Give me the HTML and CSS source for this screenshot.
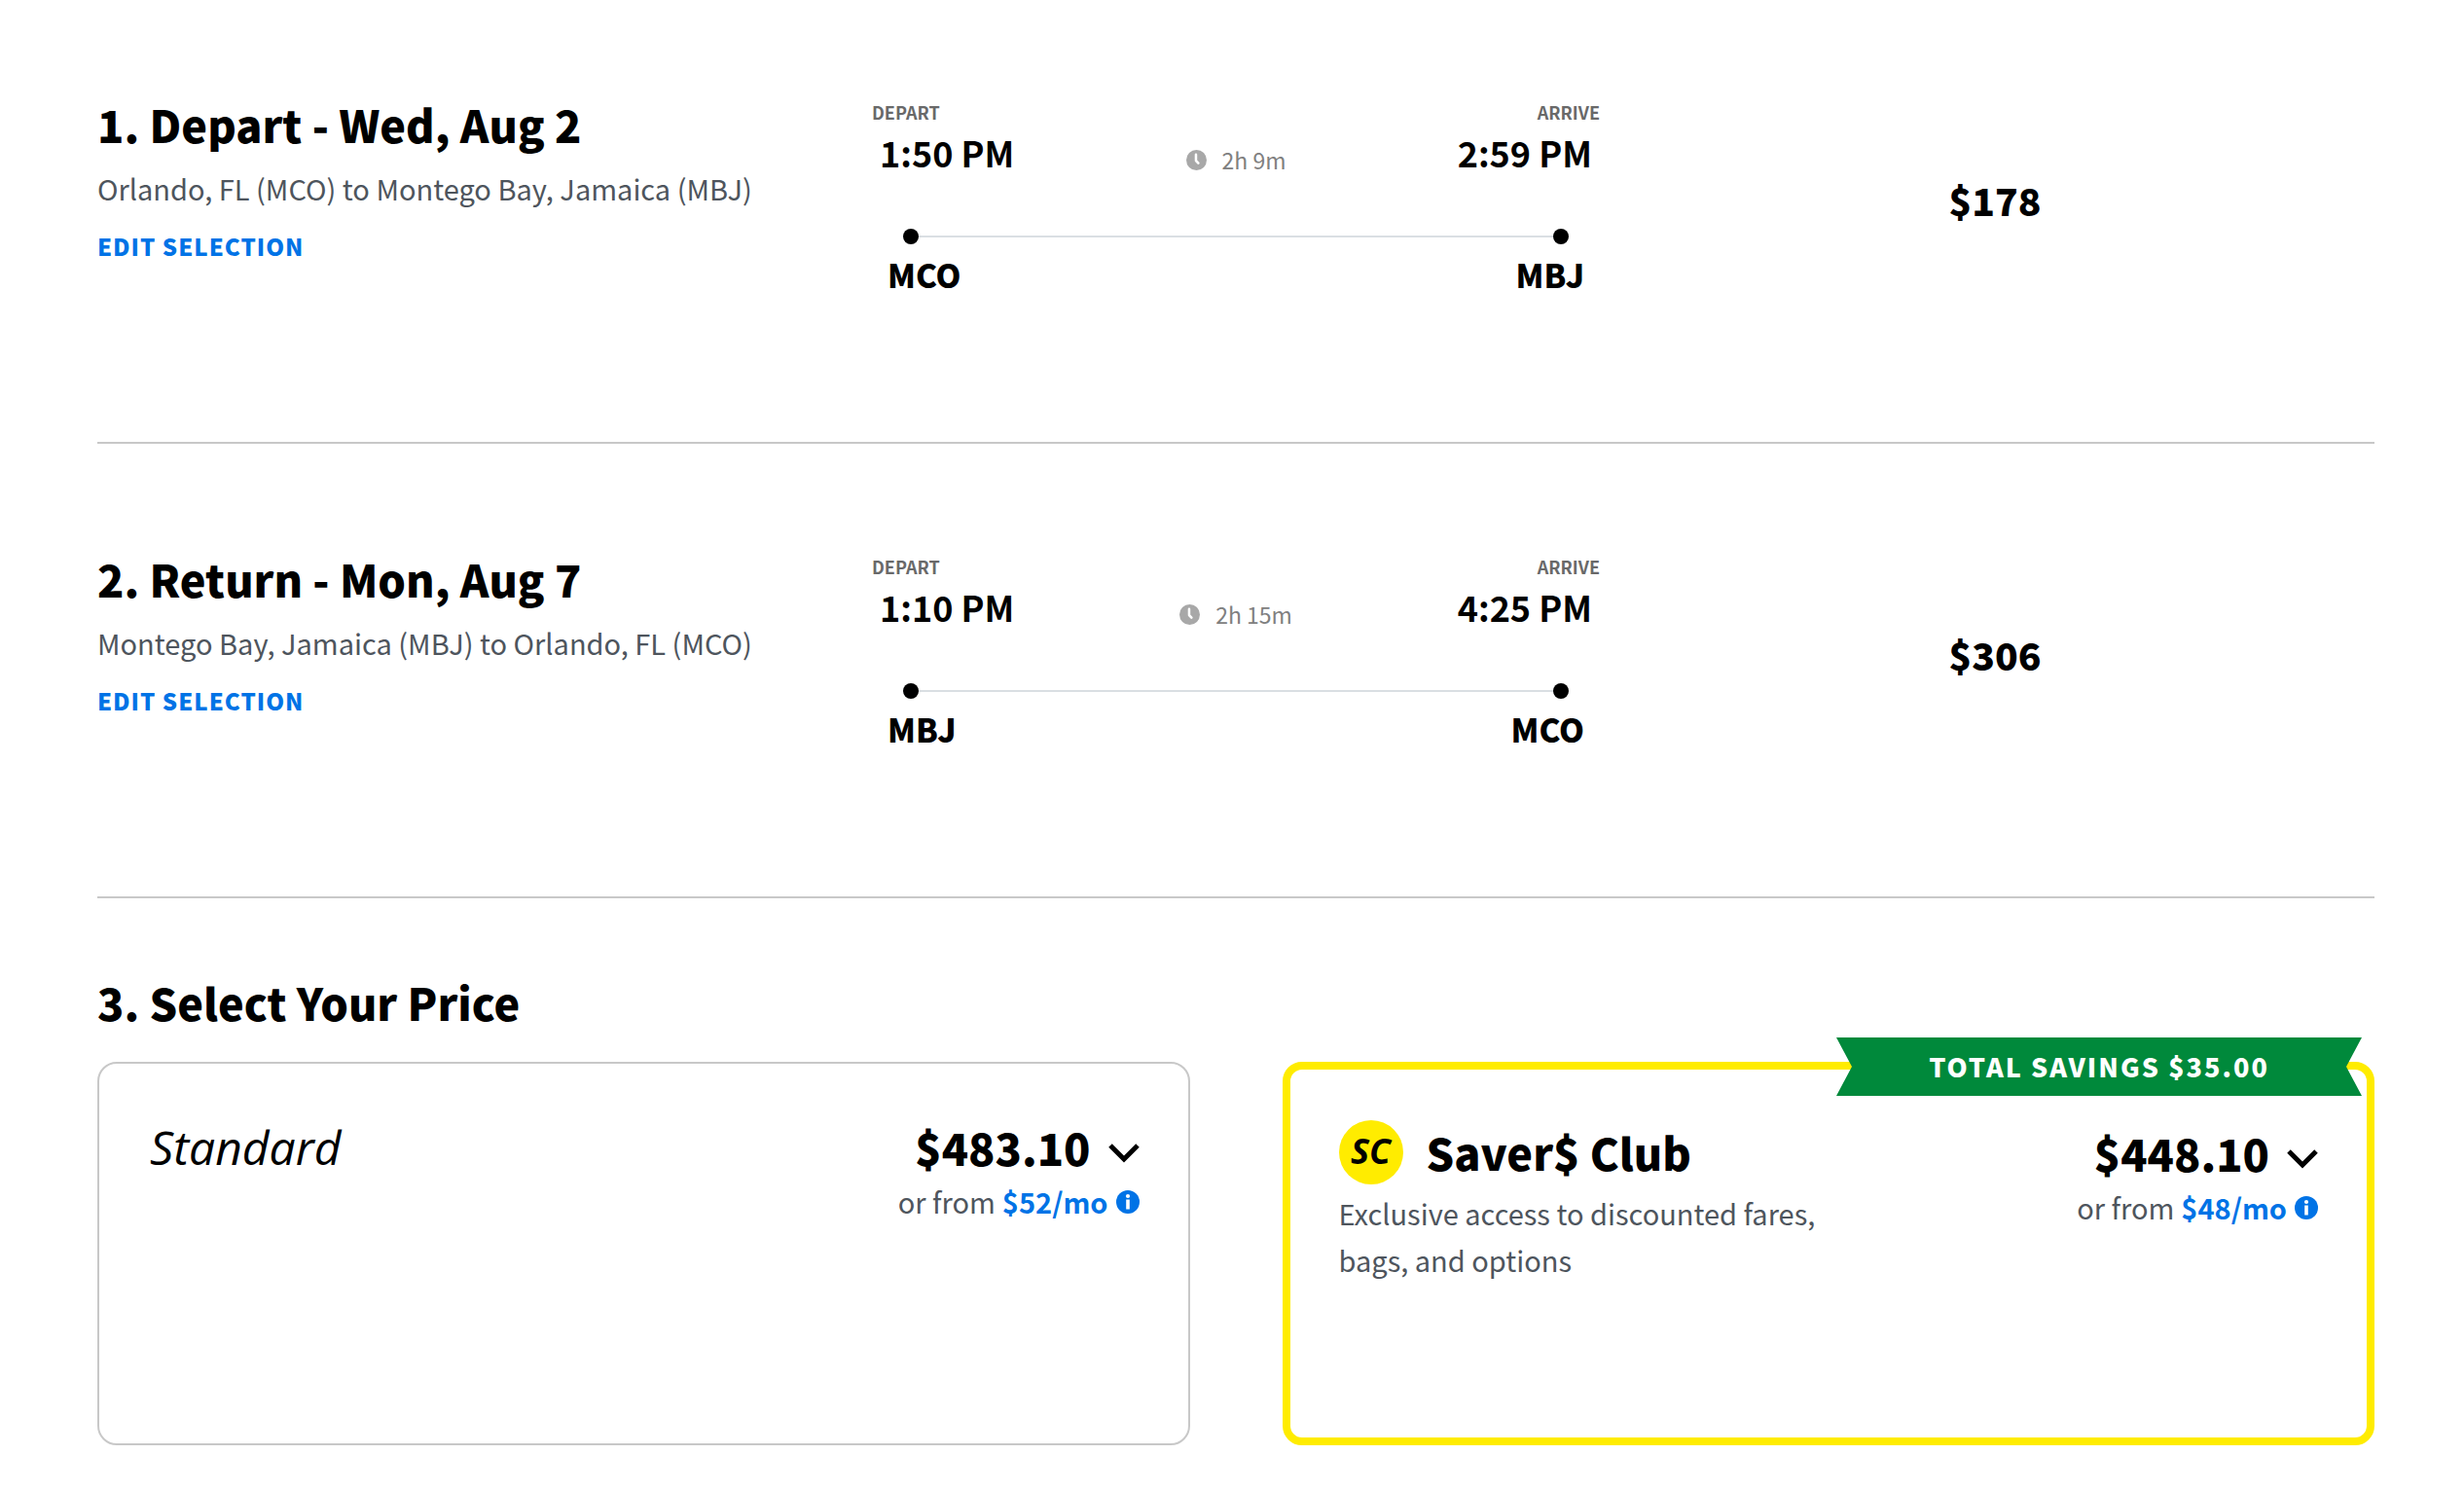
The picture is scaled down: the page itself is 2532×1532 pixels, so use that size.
FILE: index.html
```html
<!DOCTYPE html>
<html lang="en">
<head>
    <meta charset="UTF-8">
    <meta name="viewport" content="width=device-width, initial-scale=1.0">
    <title>Select Your Price</title>
    <link rel="stylesheet" href="styles.css">
</head>
<body>
    <main class="container">
        <section class="flight">
            <div class="flight-info">
                <h2>1. Depart - Wed, Aug 2</h2>
                <p class="route">Orlando, FL (MCO) to Montego Bay, Jamaica (MBJ)</p>
                <a class="edit-link" href="#">EDIT SELECTION</a>
            </div>
            <div class="schedule">
                <div class="labels"><span>DEPART</span><span>ARRIVE</span></div>
                <div class="times">
                    <span>1:50 PM</span>
                    <span class="duration">
                        <svg class="clock" viewBox="0 0 20 20" aria-hidden="true">
                            <circle cx="10" cy="10" r="10" fill="#a8a8a8"/>
                            <path d="M9.5 4.5V10.5L11.8 13" fill="none" stroke="#fff" stroke-width="2.4" stroke-linecap="round" stroke-linejoin="round"/>
                        </svg>
                        2h 9m
                    </span>
                    <span>2:59 PM</span>
                </div>
                <div class="track"></div>
                <div class="airports"><span>MCO</span><span>MBJ</span></div>
            </div>
            <div class="fare">$178</div>
        </section>

        <section class="flight">
            <div class="flight-info">
                <h2>2. Return - Mon, Aug 7</h2>
                <p class="route">Montego Bay, Jamaica (MBJ) to Orlando, FL (MCO)</p>
                <a class="edit-link" href="#">EDIT SELECTION</a>
            </div>
            <div class="schedule">
                <div class="labels"><span>DEPART</span><span>ARRIVE</span></div>
                <div class="times">
                    <span>1:10 PM</span>
                    <span class="duration">
                        <svg class="clock" viewBox="0 0 20 20" aria-hidden="true">
                            <circle cx="10" cy="10" r="10" fill="#a8a8a8"/>
                            <path d="M9.5 4.5V10.5L11.8 13" fill="none" stroke="#fff" stroke-width="2.4" stroke-linecap="round" stroke-linejoin="round"/>
                        </svg>
                        2h 15m
                    </span>
                    <span>4:25 PM</span>
                </div>
                <div class="track"></div>
                <div class="airports"><span>MBJ</span><span>MCO</span></div>
            </div>
            <div class="fare">$306</div>
        </section>

        <section class="prices">
            <h2>3. Select Your Price</h2>
            <div class="cards">
                <div class="card standard">
                    <h3 class="standard-title">Standard</h3>
                    <div class="card-price">
                        <button type="button" class="total">
                            $483.10
                            <svg class="chevron" viewBox="0 0 32 20" aria-hidden="true">
                                <path d="M2 2L16 16L30 2" fill="none" stroke="#000" stroke-width="5"/>
                            </svg>
                        </button>
                        <p class="monthly">or from
                            <a href="#">$52/mo
                                <svg class="info" viewBox="0 0 24 24" aria-hidden="true">
                                    <circle cx="12" cy="12" r="12" fill="#0073e6"/>
                                    <path d="M12 9.5V19.5" stroke="#fff" stroke-width="3.6"/>
                                    <circle cx="12" cy="6" r="2.1" fill="#fff"/>
                                </svg>
                            </a>
                        </p>
                    </div>
                </div>

                <div class="card club">
                    <div class="ribbon">TOTAL SAVINGS $35.00</div>
                    <div class="club-info">
                        <div class="club-title">
                            <span class="club-badge">SC</span>
                            <h3>Saver$ Club</h3>
                        </div>
                        <p class="club-text">Exclusive access to discounted fares, bags, and options</p>
                    </div>
                    <div class="card-price">
                        <button type="button" class="total">
                            $448.10
                            <svg class="chevron" viewBox="0 0 32 20" aria-hidden="true">
                                <path d="M2 2L16 16L30 2" fill="none" stroke="#000" stroke-width="5"/>
                            </svg>
                        </button>
                        <p class="monthly">or from
                            <a href="#">$48/mo
                                <svg class="info" viewBox="0 0 24 24" aria-hidden="true">
                                    <circle cx="12" cy="12" r="12" fill="#0073e6"/>
                                    <path d="M12 9.5V19.5" stroke="#fff" stroke-width="3.6"/>
                                    <circle cx="12" cy="6" r="2.1" fill="#fff"/>
                                </svg>
                            </a>
                        </p>
                    </div>
                </div>
            </div>
        </section>
    </main>
</body>
</html>
```
FILE: styles.css
```css
:root {
    --text-color: #000000;
    --muted-color: #4e555d;
    --link-color: #0073e6;
    --border-color: #c8c8c8;
    --club-color: #ffec00;
    --savings-color: #00893b;
}

* {
    margin: 0;
    padding: 0;
    box-sizing: border-box;
}

body {
    background-color: #ffffff;
    color: var(--text-color);
    font-family: "Noto Sans CJK SC", "Open Sans", sans-serif;
}

.container {
    padding: 0 92px 44px 100px;
}

h2,
h3 {
    font-size: 45px;
    line-height: 62px;
    font-weight: 900;
}

a {
    color: var(--link-color);
    text-decoration: none;
}

.flight {
    display: grid;
    grid-template-columns: repeat(3, 1fr);
    padding: 97px 0 142px;
    margin-bottom: 11px;
    border-bottom: 2px solid var(--border-color);
}

.route {
    margin: 10px 0 18px;
    font-size: 29px;
    line-height: 48px;
    color: var(--muted-color);
    white-space: nowrap;
}

.edit-link {
    display: inline-block;
    font-size: 24px;
    line-height: 36px;
    font-weight: 900;
    letter-spacing: 1px;
}

.schedule {
    padding: 6px 16px;
}

.labels,
.times,
.airports {
    display: flex;
    justify-content: space-between;
}

.labels {
    font-size: 18px;
    line-height: 24px;
    font-weight: 700;
    color: #696969;
}

.times {
    padding: 5px 8px 0;
    font-size: 36px;
    line-height: 48px;
    font-weight: 700;
}

.duration {
    display: flex;
    align-items: center;
    gap: 16px;
    padding-top: 16px;
    font-size: 23px;
    line-height: 32px;
    font-weight: 400;
    color: #808080;
}

.clock {
    width: 21px;
    height: 21px;
}

.track {
    display: flex;
    align-items: center;
    justify-content: space-between;
    margin: 55px 32px 7px;
    background: linear-gradient(#dadfe3, #dadfe3) center / 100% 2px no-repeat;
}

.track::before,
.track::after {
    content: "";
    width: 16px;
    height: 16px;
    border-radius: 50%;
    background-color: var(--text-color);
}

.airports {
    padding: 0 16px;
    font-size: 33px;
    line-height: 48px;
    font-weight: 900;
}

.fare {
    align-self: center;
    text-align: center;
    font-size: 39px;
    line-height: 48px;
    font-weight: 900;
}

.prices {
    padding-top: 65px;
}

.cards {
    display: grid;
    grid-template-columns: 1fr 1fr;
    gap: 95px;
    margin-top: 30px;
}

.card {
    position: relative;
    display: flex;
    justify-content: space-between;
    min-height: 394px;
    padding: 52px 50px;
    border: 2px solid var(--border-color);
    border-radius: 20px;
}

.club {
    border: 8px solid var(--club-color);
}

.standard {
    padding-left: 52px;
}

.standard-title {
    padding-top: 3px;
    font-family: "Open Sans", sans-serif;
    font-size: 48px;
    font-style: italic;
    font-weight: 400;
}

.club-info {
    max-width: 500px;
}

.club-title {
    display: flex;
    align-items: center;
    gap: 24px;
}

.club-badge {
    width: 66px;
    height: 66px;
    border-radius: 50%;
    background-color: var(--club-color);
    font-family: "Open Sans", sans-serif;
    font-size: 36px;
    line-height: 64px;
    font-style: italic;
    font-weight: 700;
    text-align: center;
}

.club-text {
    margin-top: 5px;
    font-size: 29px;
    line-height: 48px;
    color: var(--muted-color);
}

.card-price {
    display: flex;
    flex-direction: column;
    align-items: flex-end;
    padding-top: 4px;
}

.total {
    display: flex;
    align-items: center;
    gap: 18px;
    border: none;
    background: none;
    color: var(--text-color);
    font-family: inherit;
    font-size: 45px;
    line-height: 60px;
    font-weight: 900;
    cursor: pointer;
}

.chevron {
    width: 32px;
    height: 20px;
    margin-top: 12px;
}

.monthly {
    display: flex;
    gap: 7px;
    margin-top: 1px;
    font-size: 29px;
    line-height: 48px;
    color: var(--muted-color);
}

.monthly a {
    display: flex;
    align-items: center;
    gap: 8px;
    font-weight: 700;
}

.info {
    width: 24px;
    height: 24px;
    margin-top: 2px;
}

.ribbon {
    position: absolute;
    top: -33px;
    right: 5px;
    width: 540px;
    background-color: var(--savings-color);
    clip-path: polygon(0 0, 100% 0, calc(100% - 16px) 50%, 100% 100%, 0 100%, 16px 50%);
    color: #ffffff;
    font-size: 27px;
    line-height: 60px;
    font-weight: 900;
    letter-spacing: 2px;
    text-align: center;
}
```
